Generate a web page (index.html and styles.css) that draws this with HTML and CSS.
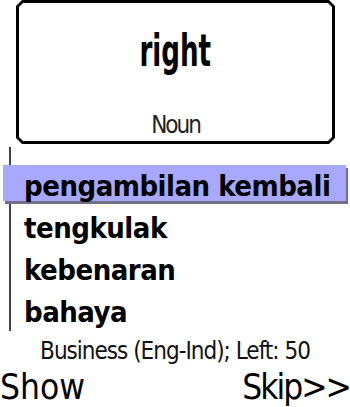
FILE: index.html
```html
<!DOCTYPE html>
<html lang="en">
<head>
  <meta charset="UTF-8">
  <meta name="viewport" content="width=device-width, initial-scale=1.0">
  <title>Flashcards</title>
<link rel="stylesheet" href="styles.css">
</head>
<body>
  <div class="screen">
    <div class="card">
      <div class="card-inner">
        <div class="word">right</div>
        <div class="pos">Noun</div>
      </div>
    </div>

    <ul class="choices">
      <li class="choice selected">pengambilan kembali</li>
      <li class="choice">tengkulak</li>
      <li class="choice">kebenaran</li>
      <li class="choice">bahaya</li>
    </ul>

    <div class="status">Business (Eng-Ind); Left: 50</div>

    <div class="softkeys">
      <span class="softkey">Show</span>
      <span class="softkey skip">Skip&gt;&gt;</span>
    </div>
  </div>
</body>
</html>
```

FILE: styles.css
```css
body {
  margin: 0;
  background-color: #ffffff;
  color: #000;
  font-family: "DejaVu Sans Condensed", "DejaVu Sans", sans-serif;
}
.screen {
  width: 350px;
  height: 407px;
  display: flex;
  flex-direction: column;
  overflow: hidden;
}
.card {
  box-sizing: border-box;
  margin-left: 16px;
  width: 319px;
  height: 148px;
  padding: 3px;
  background-color: #000;
  clip-path: polygon(6px 0, calc(100% - 6px) 0, 100% 6px, 100% calc(100% - 6px), calc(100% - 6px) 100%, 6px 100%, 0 calc(100% - 6px), 0 6px);
}
.card-inner {
  height: 100%;
  background-color: #fff;
  display: flex;
  flex-direction: column;
  align-items: center;
  clip-path: polygon(4px 0, calc(100% - 4px) 0, 100% 4px, 100% calc(100% - 4px), calc(100% - 4px) 100%, 4px 100%, 0 calc(100% - 4px), 0 4px);
}
.word {
  margin-top: 23px;
  font-weight: bold;
  font-size: 44px;
  line-height: 50px;
  transform: scaleX(0.66);
}
.pos {
  margin-top: auto;
  margin-bottom: 1px;
  font-size: 24px;
  letter-spacing: -2px;
  line-height: 30px;
  color: #222;
}
.choices {
  list-style: none;
  margin: 3px 0 0 9px;
  padding: 18px 0 0;
  border-left: 2px solid #444;
  height: 166px;
}
.choice {
  height: 30px;
  padding: 6px 0 0 13px;
  margin-bottom: 6px;
  font-weight: bold;
  font-size: 29px;
  letter-spacing: -0.5px;
  line-height: 30px;
  white-space: nowrap;
}
.choice.selected {
  margin-left: -8px;
  padding-left: 21px;
  width: 322px;
  background-color: #a8a8ff;
  box-shadow: 2px 3px 0 #707088;
}
.status {
  margin-top: 8px;
  text-align: center;
  font-size: 24px;
  letter-spacing: -1px;
  line-height: 24px;
  color: #111;
}
.softkeys {
  display: flex;
  justify-content: space-between;
  padding-top: 4px;
  font-size: 35px;
  line-height: 40px;
}
.skip {
  letter-spacing: -2px;
}
```
